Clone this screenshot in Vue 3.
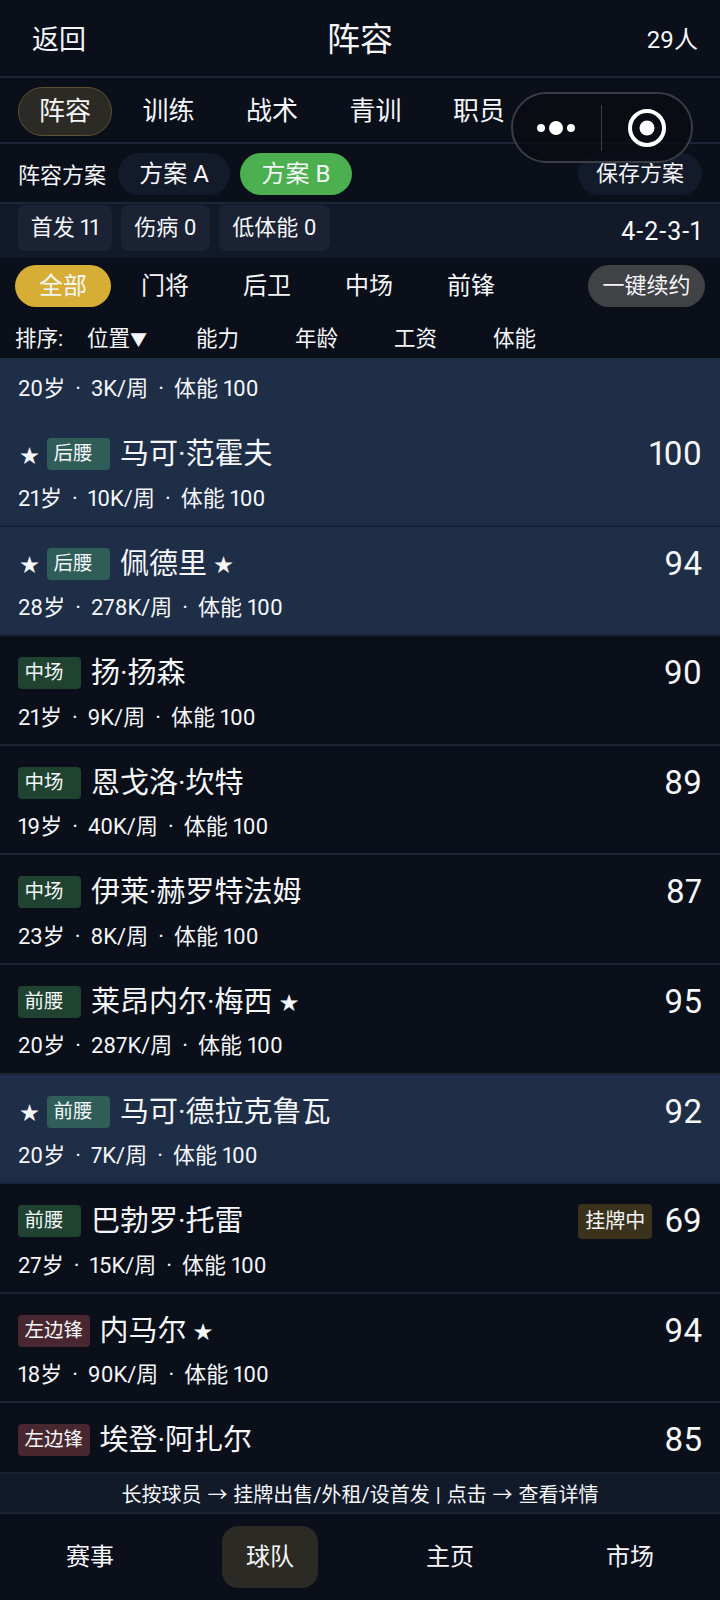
<template>
  <div class="page">
    <header class="top">
      <span class="back">返回</span>
      <span class="title">阵容</span>
      <span class="count">29人</span>
    </header>

    <nav class="tabs">
      <span v-for="(t, i) in tabs" :key="t" class="tab" :class="{ on: i === 0 }">{{ t }}</span>
    </nav>

    <div class="capsule">
      <svg class="dots" width="40" height="14" viewBox="0 0 40 14">
        <circle cx="5" cy="7" r="4" fill="#fff" />
        <circle cx="20" cy="7" r="7" fill="#fff" />
        <circle cx="35" cy="7" r="4" fill="#fff" />
      </svg>
      <i class="capsule-line"></i>
      <svg width="38" height="38" viewBox="0 0 38 38">
        <circle cx="19" cy="19" r="17" fill="none" stroke="#fff" stroke-width="4" />
        <circle cx="19" cy="19" r="7.5" fill="#fff" />
      </svg>
    </div>

    <div class="plans">
      <span class="plans-label">阵容方案</span>
      <span class="plan">方案 A</span>
      <span class="plan green">方案 B</span>
      <span class="plan save">保存方案</span>
    </div>

    <div class="stats">
      <span v-for="s in stats" :key="s" class="stat">{{ s }}</span>
      <span class="formation">4-2-3-1</span>
    </div>

    <div class="filters">
      <span v-for="(f, i) in filters" :key="f" class="filter" :class="{ on: i === 0 }">{{ f }}</span>
      <span class="renew">一键续约</span>
    </div>

    <div class="sorts">
      <span class="sort-label">排序:</span>
      <span v-for="(s, i) in sorts" :key="s" class="sort" :class="{ first: i === 0 }">{{ s }}<span v-if="i === 0" class="arrow">▼</span></span>
    </div>

    <div class="list">
      <div class="row cut starter">
        <div class="meta">
          <span>20岁</span><span class="sep">·</span><span>3K/周</span><span class="sep">·</span><span>体能 100</span>
        </div>
      </div>
      <div v-for="p in players" :key="p.name" class="row" :class="{ starter: p.starter, last: p.last }">
        <div class="line">
          <span v-if="p.starter" class="mark">★</span>
          <span class="pos" :class="p.kind">{{ p.pos }}</span>
          <span class="name">{{ p.name }}</span>
          <span v-if="p.star" class="star">★</span>
          <span v-if="p.listed" class="listed">挂牌中</span>
          <span class="score" :class="{ pushed: !p.listed }">{{ p.score }}</span>
        </div>
        <div v-if="p.age" class="meta">
          <span>{{ p.age }}岁</span><span class="sep">·</span><span>{{ p.wage }}K/周</span><span class="sep">·</span><span>体能 100</span>
        </div>
      </div>
    </div>

    <div class="hint">长按球员 → 挂牌出售/外租/设首发 | 点击 → 查看详情</div>

    <footer class="bottom">
      <span v-for="(b, i) in bottom" :key="b" class="item" :class="{ on: i === 1 }">{{ b }}</span>
    </footer>
  </div>
</template>

<script setup>
const tabs = ["阵容", "训练", "战术", "青训", "职员"];
const stats = ["首发 11", "伤病 0", "低体能 0"];
const filters = ["全部", "门将", "后卫", "中场", "前锋"];
const sorts = ["位置", "能力", "年龄", "工资", "体能"];
const bottom = ["赛事", "球队", "主页", "市场"];

const players = [
  { name: "马可·范霍夫", pos: "后腰", kind: "dm", score: 100, starter: true, age: 21, wage: 10 },
  { name: "佩德里", pos: "后腰", kind: "dm", score: 94, starter: true, star: true, age: 28, wage: 278 },
  { name: "扬·扬森", pos: "中场", kind: "mid", score: 90, age: 21, wage: 9 },
  { name: "恩戈洛·坎特", pos: "中场", kind: "mid", score: 89, age: 19, wage: 40 },
  { name: "伊莱·赫罗特法姆", pos: "中场", kind: "mid", score: 87, age: 23, wage: 8 },
  { name: "莱昂内尔·梅西", pos: "前腰", kind: "mid", score: 95, star: true, age: 20, wage: 287 },
  { name: "马可·德拉克鲁瓦", pos: "前腰", kind: "dm", score: 92, starter: true, age: 20, wage: 7 },
  { name: "巴勃罗·托雷", pos: "前腰", kind: "mid", score: 69, listed: true, age: 27, wage: 15 },
  { name: "内马尔", pos: "左边锋", kind: "fw", score: 94, star: true, age: 18, wage: 90 },
  { name: "埃登·阿扎尔", pos: "左边锋", kind: "fw", score: 85, last: true },
];
</script>

<style>
body {
  background: #0a0f1a;
}
</style>

<style scoped>
.page {
  position: relative;
  width: 720px;
  height: 1600px;
  overflow: hidden;
  display: flex;
  flex-direction: column;
  background: #0a0f1a;
  color: #f4f6f8;
  font-family: "Roboto", "Noto Sans CJK SC", sans-serif;
  font-weight: 400;
  font-variant-numeric: proportional-nums;
}

.top {
  height: 78px;
  flex: none;
  box-sizing: border-box;
  display: grid;
  grid-template-columns: 1fr auto 1fr;
  align-items: center;
  padding: 0 22px 2px;
  border-bottom: 2px solid #1d2637;
}

.back {
  font-size: 27px;
  margin-left: 10px;
}

.title {
  font-size: 33px;
}

.count {
  justify-self: end;
  font-size: 24px;
}

.tabs {
  height: 66px;
  flex: none;
  box-sizing: border-box;
  display: flex;
  align-items: center;
  padding: 3px 0 0 18px;
  gap: 9.5px;
  border-bottom: 2px solid #1d2637;
}

.tab {
  box-sizing: border-box;
  width: 94px;
  text-align: center;
  font-size: 26px;
  line-height: 47px;
  border: 1px solid transparent;
  border-radius: 25px;
}

.tab.on {
  background: #2c2a24;
  border-color: #5e5230;
}

.capsule {
  position: absolute;
  left: 511px;
  top: 92px;
  width: 182px;
  height: 71px;
  box-sizing: border-box;
  display: flex;
  align-items: center;
  padding-left: 23px;
  background: rgba(10, 12, 18, 0.82);
  border: 2px solid #3a3d45;
  border-radius: 36px;
}

.dots {
  flex: none;
}

.capsule-line {
  width: 1px;
  height: 46px;
  background: #3d4047;
  margin: 0 26px 0 25px;
}

.plans {
  height: 60px;
  flex: none;
  box-sizing: border-box;
  display: flex;
  align-items: center;
  padding: 2px 18px 0;
  gap: 10px;
  border-bottom: 2px solid #1d2637;
}

.plans-label {
  font-size: 22px;
  margin-right: 2px;
  padding-bottom: 3px;
}

.plan {
  box-sizing: border-box;
  width: 112px;
  height: 42px;
  line-height: 42px;
  text-align: center;
  border-radius: 21px;
  font-size: 24px;
  background: #131a29;
}

.plan.green {
  background: #4caf50;
}

.plan.save {
  margin-left: auto;
  width: 124px;
  font-size: 22px;
}

.stats {
  height: 54px;
  flex: none;
  box-sizing: border-box;
  display: flex;
  align-items: flex-start;
  padding: 1px 18px 0;
  gap: 9px;
  background: #121a2a;
}

.stat {
  height: 46px;
  line-height: 46px;
  text-align: center;
  border-radius: 8px;
  background: #1a2234;
  font-size: 22px;
}

.stat:nth-child(1) {
  width: 94px;
}

.stat:nth-child(2) {
  width: 89px;
}

.stat:nth-child(3) {
  width: 111px;
}

.formation {
  margin-left: auto;
  line-height: 54px;
  font-size: 25px;
  letter-spacing: 1px;
}

.filters {
  height: 56px;
  flex: none;
  box-sizing: border-box;
  display: flex;
  align-items: center;
  padding: 0 15px;
}

.filter {
  width: 102px;
  text-align: center;
  font-size: 24px;
  line-height: 42px;
  border-radius: 21px;
}

.filter.on {
  width: 96px;
  margin-right: 3px;
  background: #d6ae36;
}

.renew {
  margin-left: auto;
  width: 117px;
  text-align: center;
  font-size: 22px;
  line-height: 42px;
  border-radius: 21px;
  background: #414246;
}

.sorts {
  height: 44px;
  flex: none;
  display: flex;
  align-items: center;
  padding-left: 15px;
  font-size: 21.5px;
}

.sort-label {
  width: 72px;
}

.sort {
  width: 99px;
}

.sort.first {
  width: 109px;
}

.arrow {
  font-size: 17px;
}

.list {
  flex: 1;
  min-height: 0;
  overflow: hidden;
  display: flex;
  flex-direction: column;
}

.row {
  flex: none;
  box-sizing: border-box;
  height: 109.6px;
  padding: 16px 18px 0;
  border-bottom: 2px solid #1c2434;
}

.row.starter {
  background: #1f2e47;
  border-bottom-color: #18233a;
}

.row.cut {
  height: 59px;
  border-bottom: 0;
  padding-top: 7.5px;
}

.row.last {
  height: 69px;
  border-bottom: 0;
}

.line {
  height: 42px;
  display: flex;
  align-items: center;
}

.mark {
  box-sizing: border-box;
  width: 29px;
  padding-left: 2px;
  font-size: 19px;
}

.pos {
  box-sizing: border-box;
  min-width: 63px;
  height: 32px;
  line-height: 31px;
  padding: 0 6.5px;
  border-radius: 4px;
  font-size: 19.5px;
  margin-right: 10px;
}

.pos.dm {
  background: #2f5e58;
}

.pos.mid {
  background: #1f4330;
}

.pos.fw {
  background: #482730;
}

.name {
  font-size: 29px;
  padding-bottom: 6px;
}

.star {
  font-size: 19px;
  margin-left: 7px;
}

.listed {
  margin-left: auto;
  height: 35px;
  line-height: 35px;
  padding: 0 7px;
  border-radius: 4px;
  background: #3a321b;
  font-size: 20px;
  margin-right: 12px;
}

.score {
  font-size: 33px;
  padding-bottom: 1px;
}

.score.pushed {
  margin-left: auto;
}

.meta {
  display: flex;
  font-size: 22px;
  line-height: 30px;
  margin-top: 8.5px;
}

.sep {
  margin: 0 10px;
}

.hint {
  height: 42px;
  flex: none;
  box-sizing: border-box;
  display: flex;
  align-items: center;
  justify-content: center;
  font-size: 20px;
  word-spacing: 1px;
  background: #121a2a;
  border-top: 2px solid #1c2434;
  border-bottom: 2px solid #1c2434;
}

.bottom {
  height: 86px;
  flex: none;
  display: grid;
  grid-template-columns: repeat(4, 180px);
  align-items: center;
  justify-items: center;
}

.item {
  width: 96px;
  height: 62px;
  line-height: 62px;
  text-align: center;
  font-size: 24px;
  border-radius: 16px;
}

.item.on {
  background: #2c2a24;
}
</style>
